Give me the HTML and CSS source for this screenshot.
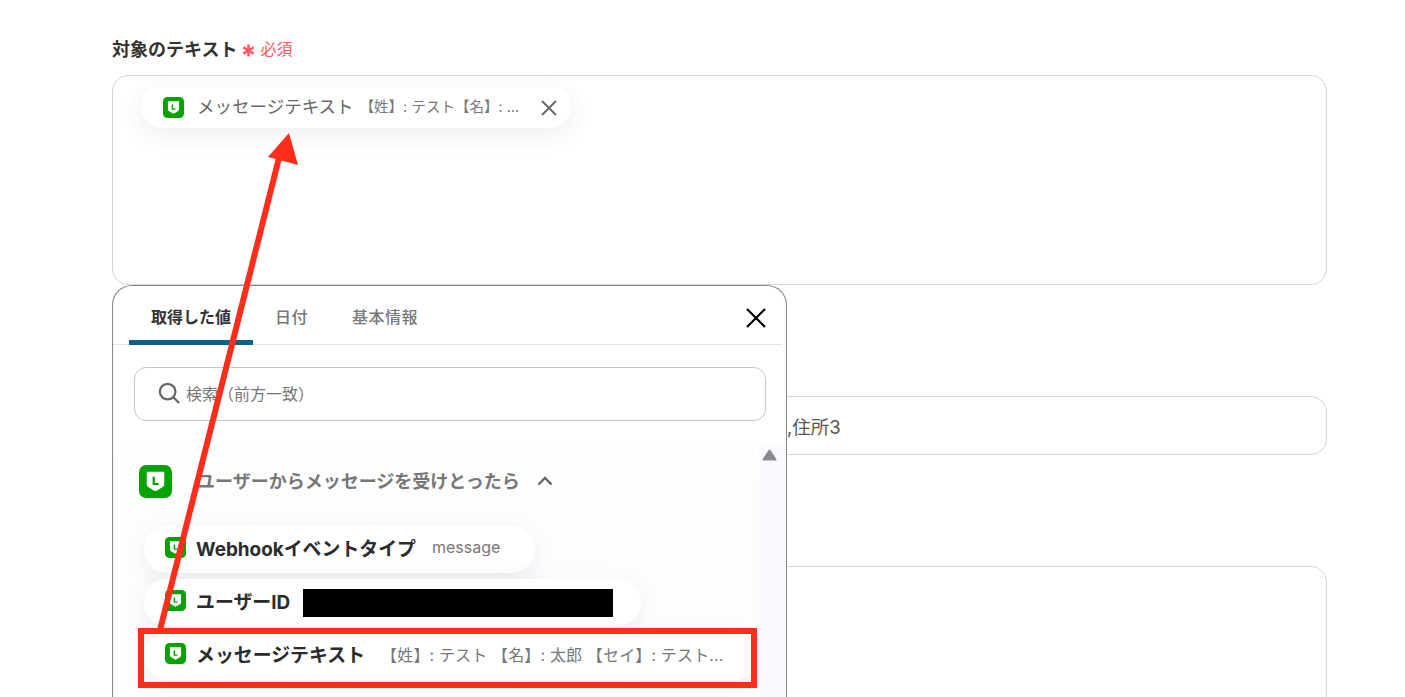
FILE: index.html

```html
<!DOCTYPE html>
<html lang="ja">
<head>
  <meta charset="UTF-8" />
  <meta name="viewport" content="width=device-width, initial-scale=1.0"/>
  <title>対象のテキスト</title>
  <link rel="stylesheet" href="styles.css">
</head>
<body>

  <svg class="defs" width="0" height="0">
    <symbol id="line-icon" viewBox="0 0 32 32">
      <rect width="32" height="32" rx="7" fill="#05a302"/>
      <path d="M7.500 6.500h17v12.500c0 2.500-5 4.500-8.500 6.500-3.500-2-8.500-4-8.500-6.500z" fill="#fff"/>
      <path d="M13.200 11.500v8h5.800v-2h-3.600v-6z" fill="#05a302"/>
    </symbol>
  </svg>

  <main class="form">
    <div class="field-label">
      <span>対象のテキスト</span>
      <span class="required">
        <svg class="star" viewBox="0 0 12 12"><path d="M6 0.500v11M1.200 3.200l9.600 5.600M10.800 3.200l-9.600 5.600"/></svg>
        必須
      </span>
    </div>
    <div class="box box-tall">
      <div class="pill pill-selected">
        <svg class="icon"><use href="#line-icon"/></svg>
        <span class="pill-name">メッセージテキスト</span>
        <span class="pill-value">【姓】: テスト【名】: ...</span>
        <svg class="pill-close" viewBox="0 0 16 16"><path d="M1 1l14 14M15 1L1 15"/></svg>
      </div>
    </div>
    <div class="box box-line">,住所3</div>
    <div class="box box-bottom"></div>
  </main>

  <!-- Value picker -->
  <section class="picker">
    <div class="tabs">
      <span class="tab active">取得した値</span>
      <span class="tab">日付</span>
      <span class="tab">基本情報</span>
      <svg class="picker-close" viewBox="0 0 20 20"><path d="M1 1l18 18M19 1L1 19"/></svg>
    </div>
    <div class="picker-body">
      <div class="scroll-track">
        <svg viewBox="0 0 15 12"><path d="M7.500 1.500L13.500 10.500H1.500z"/></svg>
      </div>
      <div class="search">
        <svg viewBox="0 0 24 24"><circle cx="10.500" cy="10.500" r="8.500"/><path d="M17 17l6 6"/></svg>
        <span>検索（前方一致）</span>
      </div>
      <div class="group">
        <svg class="group-icon"><use href="#line-icon"/></svg>
        <span class="group-title">ユーザーからメッセージを受けとったら</span>
        <svg class="chevron" viewBox="0 0 16 10"><path d="M1.500 8.500L8 2l6.500 6.500"/></svg>
      </div>
      <div class="items">
        <div class="pill item">
          <svg class="icon"><use href="#line-icon"/></svg>
          <span class="item-name">Webhookイベントタイプ</span>
          <span class="item-value">message</span>
        </div>
        <div class="pill item">
          <svg class="icon"><use href="#line-icon"/></svg>
          <span class="item-name">ユーザーID</span>
          <span class="redacted"></span>
        </div>
        <div class="pill item item-wide">
          <svg class="icon"><use href="#line-icon"/></svg>
          <span class="item-name">メッセージテキスト</span>
          <span class="item-value">【姓】: テスト 【名】: 太郎 【セイ】: テスト...</span>
        </div>
      </div>
    </div>
  </section>

  <!-- Annotation on top of the screenshot -->
  <svg class="annotation" width="1405" height="697" viewBox="0 0 1405 697">
    <path d="M160 630L279 158" stroke="#ff2d1a" stroke-width="6" fill="none"/>
    <polygon points="289,133 298,165 268,157" fill="#ff2d1a"/>
    <rect x="141" y="631" width="613" height="54" stroke="#ff2d1a" stroke-width="6" fill="none"/>
  </svg>

</body>
</html>
```

FILE: styles.css

```css
* {
  box-sizing: border-box;
}

html, body {
  height: 697px;
}

body {
  margin: 0;
  overflow: hidden;
  position: relative;
  background-color: #fff;
  color: #333;
  font-family: Inter, 'Noto Sans CJK JP', sans-serif;
}

.defs {
  position: absolute;
}

.form {
  width: 1215px;
  height: 697px;
  margin-left: 112px;
  padding-top: 37px;
  overflow: hidden;
}

.field-label {
  display: flex;
  align-items: center;
  gap: 5px;
  height: 26px;
  padding-bottom: 4px;
  font-size: 18px;
  font-weight: 700;
  color: #333;
}

.required {
  display: flex;
  align-items: center;
  gap: 6px;
  font-size: 16px;
  font-weight: 400;
  color: #ff5a66;
}

.star {
  width: 13px;
  height: 13px;
  margin-top: 4px;
  margin-right: -1px;
  fill: none;
  stroke: #ff5a66;
  stroke-width: 2.400;
}

.box {
  border: 1px solid #d3d5e0;
  border-radius: 16px;
}

.box-tall {
  height: 210px;
  margin-top: 12px;
  padding: 11px 28px;
}

.box-line {
  height: 59px;
  margin-top: 111px;
  padding-left: 674px;
  font-size: 18.500px;
  line-height: 60px;
  color: #555;
}

.box-bottom {
  height: 200px;
  margin-top: 111px;
}

.pill {
  display: flex;
  align-items: center;
  background-color: #fff;
  border-radius: 24px;
  box-shadow: 0 6px 24px rgba(70, 50, 110, 0.09);
}

.pill-selected {
  width: 430px;
  height: 41px;
  padding-left: 22px;
}

.icon {
  flex: none;
  width: 21px;
  height: 21px;
}

.pill-name {
  margin-left: 13px;
  margin-bottom: 4px;
  font-size: 17.500px;
  color: #666;
  white-space: nowrap;
}

.pill-value {
  margin-left: 6px;
  margin-bottom: 4px;
  font-size: 14.500px;
  color: #777;
  white-space: nowrap;
}

.pill-close {
  flex: none;
  width: 16px;
  height: 16px;
  margin-left: auto;
  margin-right: 14px;
  fill: none;
  stroke: #666;
  stroke-width: 1.800;
}

/* runs off the bottom of the window, so no bottom edge */
.picker {
  position: absolute;
  left: 112px;
  top: 285px;
  width: 675px;
  height: 412px;
  overflow: hidden;
  background-color: #fff;
  border: 1px solid #85858b;
  border-bottom: none;
  border-radius: 20px 20px 0 0;
}

.tabs {
  display: flex;
  height: 59px;
  margin-right: 4px;
  padding-left: 16px;
  border-bottom: 1px solid #e5e5e8;
  position: relative;
}

.tab {
  height: 59px;
  padding: 19px 22px 0;
  font-size: 16px;
  line-height: 24px;
  font-weight: 500;
  color: #777;
  letter-spacing: 0.500px;
  white-space: nowrap;
}

.tab.active {
  color: #333;
  font-weight: 700;
  letter-spacing: 0;
  border-bottom: 5px solid #0b6285;
}

.picker-close {
  position: absolute;
  right: 16px;
  top: 22px;
  width: 20px;
  height: 20px;
  fill: none;
  stroke: #000;
  stroke-width: 2.200;
}

.picker-body {
  height: 352px;
  padding: 22px 0 0 21px;
  background: linear-gradient(#fff 90px, #fefdfe 130px);
  position: relative;
}

.scroll-track {
  position: absolute;
  right: 0;
  top: 100px;
  bottom: 0;
  width: 27px;
  padding: 4px 0 0 3px;
  background-color: #fbf9fd;
}

.scroll-track svg {
  display: block;
  width: 15px;
  height: 12px;
  fill: #8a8a8e;
  stroke: #8a8a8e;
  stroke-width: 2;
  stroke-linejoin: round;
}

.search {
  display: flex;
  align-items: center;
  width: 632px;
  height: 54px;
  padding-left: 23px;
  padding-bottom: 2px;
  background-color: #fff;
  border: 1px solid #c6c6cc;
  border-radius: 12px;
  font-size: 16px;
  color: #777;
}

.search svg {
  width: 22px;
  height: 22px;
  margin-right: 6px;
  fill: none;
  stroke: #666;
  stroke-width: 2.400;
}

.group {
  display: flex;
  align-items: center;
  margin-top: 43px;
  margin-left: 5px;
  height: 34px;
}

.group-icon {
  flex: none;
  width: 33px;
  height: 33px;
}

.group-title {
  margin-left: 25px;
  margin-bottom: 2px;
  font-size: 18px;
  font-weight: 700;
  color: #777;
  white-space: nowrap;
}

.chevron {
  width: 16px;
  height: 10px;
  margin-left: 17px;
  fill: none;
  stroke: #666;
  stroke-width: 2.400;
}

.items {
  display: flex;
  flex-direction: column;
  align-items: flex-start;
  gap: 6px;
  margin-top: 28px;
  margin-left: 10px;
}

.item {
  height: 47px;
  padding-left: 21px;
  padding-right: 35px;
  padding-bottom: 5px;
}

.item-name {
  margin-left: 10px;
  font-size: 18.900px;
  font-weight: 700;
  color: #2c2c2c;
  white-space: nowrap;
}

.item-value {
  margin-left: 16px;
  font-size: 16px;
  color: #777;
  white-space: nowrap;
}

.redacted {
  width: 310px;
  height: 28px;
  margin-left: 13px;
  margin-right: -7px;
  margin-top: 5px;
  background-color: #000;
}

.item-wide {
  width: 614px;
  height: 48px;
}

.item-wide .item-value {
  margin-left: 16px;
  letter-spacing: 0.150px;
}

.annotation {
  position: absolute;
  left: 0;
  top: 0;
}
```
